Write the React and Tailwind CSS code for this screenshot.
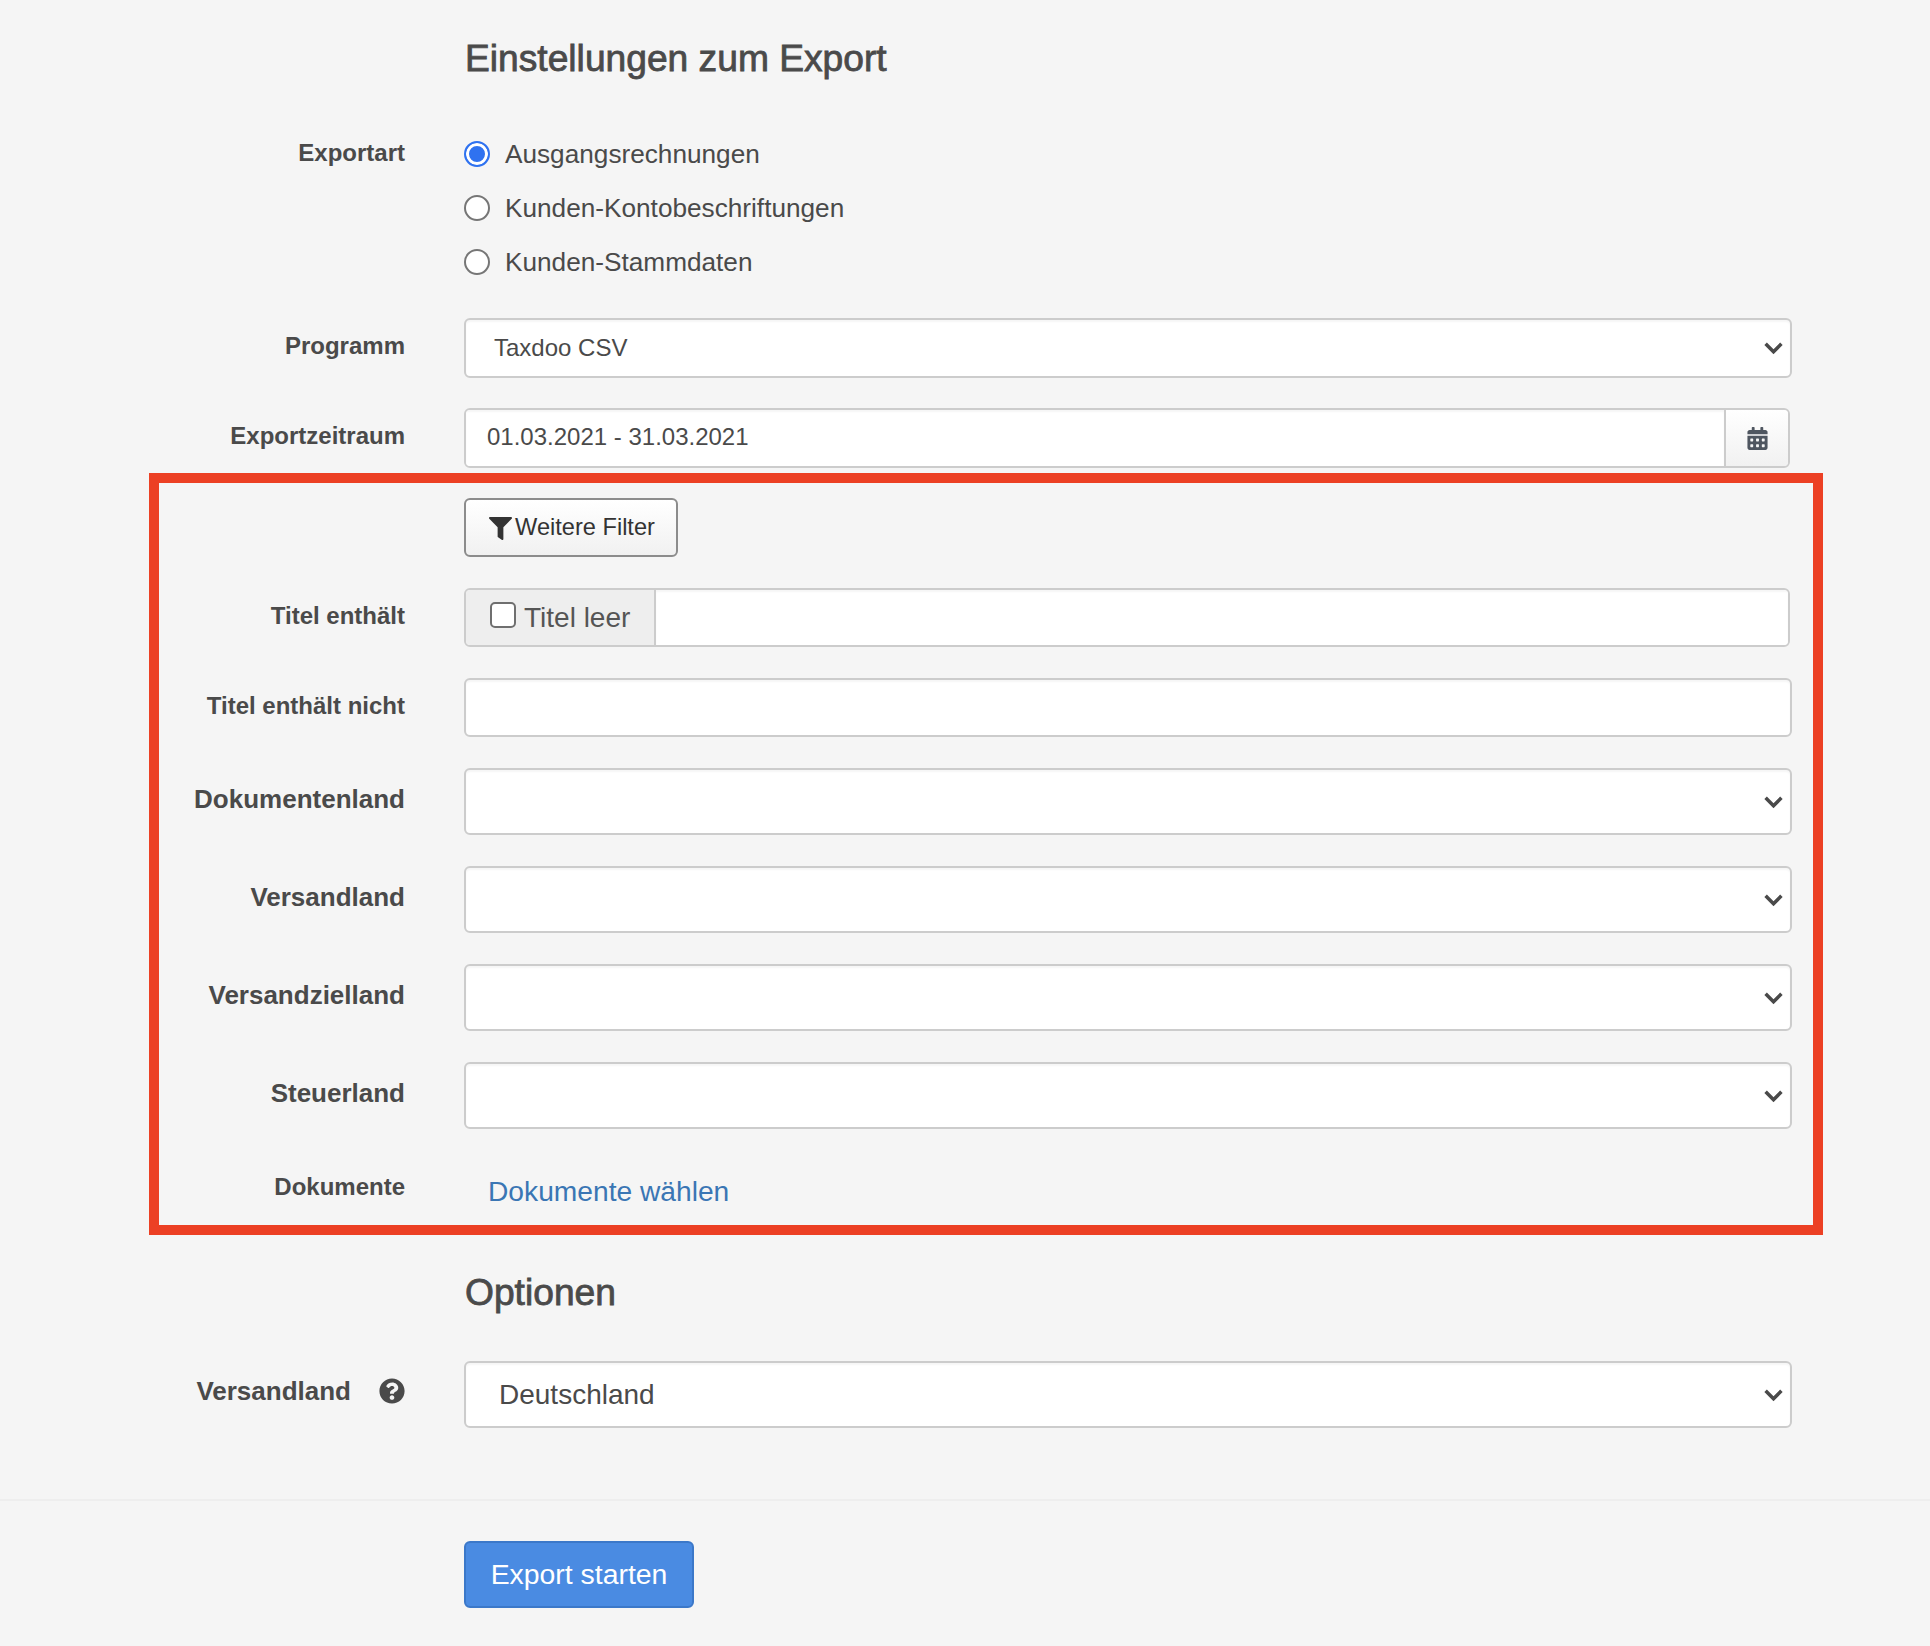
import React from 'react';
import { FaFilter, FaCalendarAlt, FaQuestionCircle } from 'react-icons/fa';

const Chevron = () => (
    <svg viewBox="0 0 20 14" className="pointer-events-none absolute right-[9px] top-1/2 h-[13px] w-[19px] -translate-y-1/2 text-[#4a4a4a]">
        <polyline points="1.5,2.5 10,11 18.5,2.5" fill="none" stroke="currentColor" strokeWidth="3.8" />
    </svg>
);

const Select = ({ value = '', height = 'h-[67px]', text = 'text-[27px] pl-[33px]' }) => (
    <div className={`relative w-full ${height}`}>
        <select defaultValue={value} className={`h-full w-full appearance-none rounded-[6px] border-2 border-[#ccc] bg-white text-[#4a4a4a] shadow-[inset_0_2px_2px_rgba(0,0,0,0.04)] outline-none ${text}`}>
            <option value={value}>{value}</option>
        </select>
        <Chevron />
    </div>
);

const Row = ({ label, children, framed, className = '', size = 'text-[26px]', labelClass = 'pb-[4px]' }) => (
    <div className={`grid items-center gap-x-[59px] ${framed ? 'grid-cols-[246px_1328px]' : 'grid-cols-[405px_1328px]'} ${className}`}>
        <label className={`text-right font-bold text-[#4a4a4a] ${labelClass} ${size}`}>{label}</label>
        <div>{children}</div>
    </div>
);

const Radio = ({ label, checked }) => (
    <label className="flex h-[54px] items-center gap-[15px] text-[26.2px] text-[#4a4a4a]">
        <input type="radio" name="art" defaultChecked={checked} className={`mb-[3px] h-[26px] w-[26px] appearance-none rounded-full border-2 ${checked ? 'border-[#2f72f0] bg-[#2f72f0] shadow-[inset_0_0_0_3px_#fff]' : 'border-[#767676] bg-white'}`} />
        <span>{label}</span>
    </label>
);

export default function App() {
    return (
        <div className="h-[1646px] w-[1930px] overflow-hidden bg-[#f5f5f5] font-['Liberation_Sans',Arial,sans-serif]">
            <h1 className="ml-[465px] box-content h-[44px] pt-[36px] text-[37.2px] leading-[44px] text-[#4a4a4a] [-webkit-text-stroke:0.8px_#4a4a4a]">Einstellungen zum Export</h1>

            <Row label="Exportart" size="text-[24px]" labelClass="pt-[7px]" className="mt-[48px] !items-start">
                <Radio label="Ausgangsrechnungen" checked />
                <Radio label="Kunden-Kontobeschriftungen" />
                <Radio label="Kunden-Stammdaten" />
            </Row>

            <Row label="Programm" size="text-[24px]" className="mt-[28px]">
                <Select value="Taxdoo CSV" height="h-[60px]" text="text-[24px] pl-[28px]" />
            </Row>

            <Row label="Exportzeitraum" size="text-[24px]" className="mt-[30px]">
                <div className="flex h-[60px] w-[1326px] overflow-hidden rounded-[6px] border-2 border-[#ccc]">
                    <input defaultValue="01.03.2021 - 31.03.2021" className="min-w-0 flex-1 bg-white pb-[2px] pl-[21px] text-[24px] text-[#4a4a4a] shadow-[inset_0_2px_2px_rgba(0,0,0,0.04)] outline-none" />
                    <span className="flex w-[64px] items-center justify-center border-l-2 border-[#ccc] bg-gradient-to-b from-[#fff] to-[#f1f1f1] text-[23px] text-[#4f5660]">
                        <FaCalendarAlt />
                    </span>
                </div>
            </Row>

            <div className="ml-[149px] mt-[5px] box-border h-[762px] w-[1674px] border-[10px] border-[#ec4024]">
                <Row framed label="" className="mt-[15px]">
                    <button className="flex h-[59px] w-[214px] items-center justify-center gap-[3px] rounded-[6px] border-2 border-[#8c8c8c] bg-gradient-to-b from-[#fff] to-[#f1f1f1] pl-[2px] pt-[1px] text-[23.6px] text-[#333]">
                        <FaFilter className="text-[23px]" />
                        Weitere Filter
                    </button>
                </Row>

                <Row framed label="Titel enthält" size="text-[24px]" className="mt-[31px]">
                    <div className="flex h-[59px] w-[1326px] overflow-hidden rounded-[6px] border-2 border-[#ccc]">
                        <span className="flex w-[190px] items-center gap-[8px] border-r-2 border-[#ccc] bg-[#eee] pl-[24px] text-[28px] text-[#555]">
                            <input type="checkbox" className="mb-[6px] h-[26px] w-[26px] appearance-none rounded-[5px] border-2 border-[#6f6f6f] bg-white" />
                            Titel leer
                        </span>
                        <input className="min-w-0 flex-1 bg-white shadow-[inset_0_2px_2px_rgba(0,0,0,0.04)] outline-none" />
                    </div>
                </Row>

                <Row framed label="Titel enthält nicht" size="text-[24px]" className="mt-[31px]">
                    <input className="h-[59px] w-full rounded-[6px] border-2 border-[#ccc] bg-white shadow-[inset_0_2px_2px_rgba(0,0,0,0.04)] outline-none" />
                </Row>

                <Row framed label="Dokumentenland" className="mt-[31px]"><Select /></Row>
                <Row framed label="Versandland" className="mt-[31px]"><Select /></Row>
                <Row framed label="Versandzielland" className="mt-[31px]"><Select /></Row>
                <Row framed label="Steuerland" className="mt-[31px]"><Select /></Row>

                <Row framed label="Dokumente" size="text-[24px]" labelClass="pb-[8px]" className="mt-[40px]">
                    <a className="ml-[24px] text-[28.2px] text-[#3a76b4]">Dokumente wählen</a>
                </Row>
            </div>

            <h2 className="ml-[465px] mt-[35px] h-[44px] text-[37.2px] leading-[44px] text-[#4a4a4a] [-webkit-text-stroke:0.8px_#4a4a4a]">Optionen</h2>

            <div className="mt-[47px] grid grid-cols-[405px_1328px] items-center gap-x-[59px]">
                <label className="flex items-center justify-end gap-[28px] pb-[7px] text-[26px] font-bold text-[#4a4a4a]">
                    Versandland
                    <FaQuestionCircle className="text-[26px]" />
                </label>
                <Select value="Deutschland" text="text-[28px] pl-[33px]" />
            </div>

            <div className="mt-[71px] border-t-2 border-[#eee]" />

            <button className="ml-[464px] mt-[40px] h-[67px] w-[230px] rounded-[6px] border-2 border-[#3b78c9] bg-[#4a8be2] text-[28.4px] text-white">Export starten</button>
        </div>
    );
}
